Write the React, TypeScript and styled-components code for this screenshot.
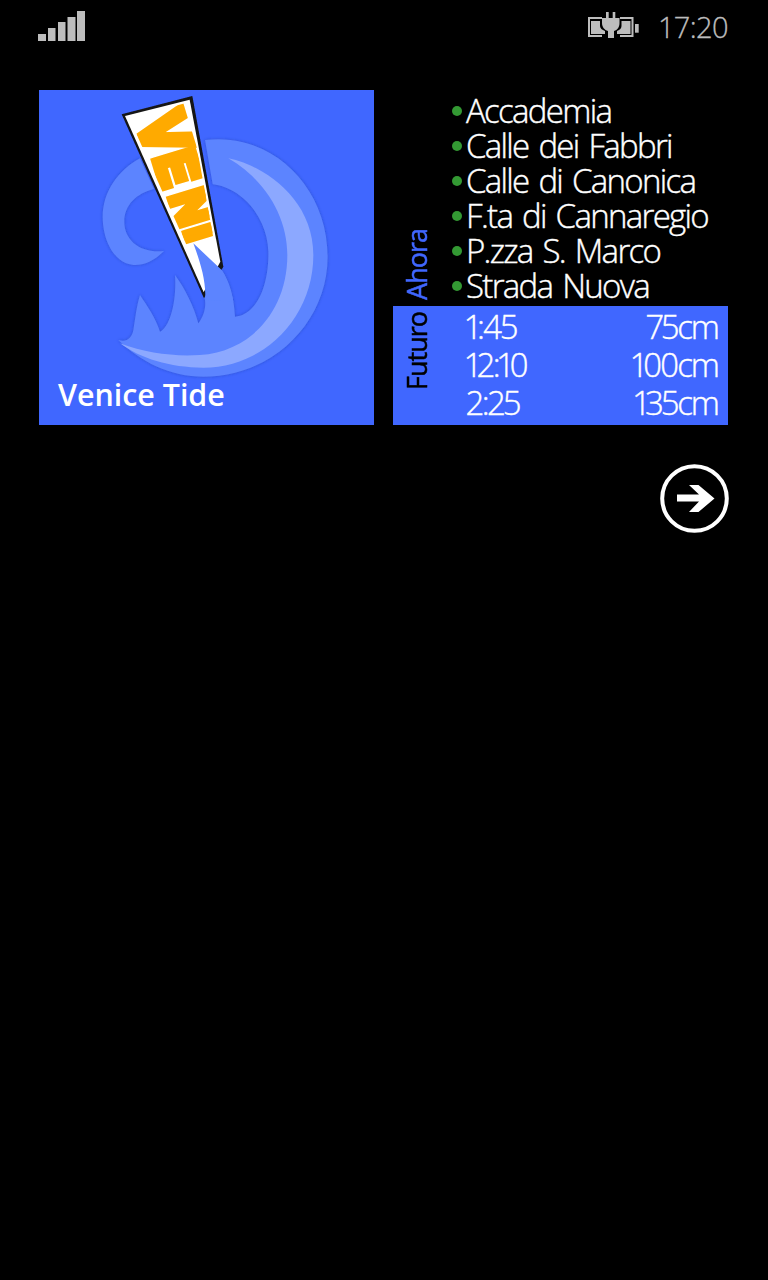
import { createGlobalStyle } from 'styled-components';
import styled from 'styled-components';

const GlobalStyle = createGlobalStyle`
  html, body {
    margin: 0;
    padding: 0;
    background: #000;
  }
  * { box-sizing: border-box; }
`;

const Screen = styled.main`
  width: 768px;
  height: 1280px;
  background: #000;
  font-family: "Open Sans", "Noto Sans", sans-serif;
  overflow: hidden;
`;

const StatusBar = styled.header`
  height: 54px;
  display: flex;
  align-items: center;
  justify-content: space-between;
  padding: 0 40px 0 38px;

  svg {
    display: block;
    margin-top: -2px;
  }
`;

const StatusRight = styled.div`
  display: flex;
  align-items: center;
  gap: 19px;
`;

const Clock = styled.span`
  font-size: 29px;
  font-weight: 300;
  line-height: 54px;
  color: #bdbdbd;
  letter-spacing: -0.6px;
  -webkit-text-stroke: 0.3px #bdbdbd;
`;

const TileGrid = styled.section`
  margin-top: 36px;
  padding-left: 39px;
  display: grid;
  grid-template-columns: 335px 335px;
  gap: 19px;
`;

const AppTile = styled.div`
  width: 335px;
  height: 335px;
  background: #4067ff;
  display: flex;
  flex-direction: column;
  align-items: flex-start;
  justify-content: flex-end;
  padding: 0 0 10px 19px;
  position: relative;
`;

const LogoArt = styled.svg`
  position: absolute;
  inset: 0;
  width: 335px;
  height: 335px;
`;

const TileName = styled.span`
  position: relative;
  font-size: 30.4px;
  line-height: 40px;
  font-weight: 600;
  color: #fff;
`;

const LiveTile = styled.div`
  width: 335px;
  height: 335px;
  display: flex;
  flex-direction: column;
`;

const Section = styled.div<{ $filled?: boolean }>`
  display: flex;
  background: ${({ $filled }) => ($filled ? '#4067ff' : 'transparent')};
  height: ${({ $filled }) => ($filled ? '119px' : '216px')};
`;

const SideLabel = styled.div<{ $tone: string; $align: 'start' | 'end' }>`
  width: 72px;
  flex: none;
  display: flex;
  justify-content: flex-start;
  align-items: ${({ $align }) => ($align === 'end' ? 'flex-end' : 'flex-start')};
  padding: ${({ $align }) => ($align === 'end' ? '0 0 6px 11px' : '6px 0 0 11px')};
  color: ${({ $tone }) => $tone};

  span {
    writing-mode: vertical-rl;
    transform: rotate(180deg);
    font-size: 27px;
    line-height: 26px;
    font-weight: 400;
    letter-spacing: -1px;
    -webkit-text-stroke: 0.5px ${({ $tone }) => $tone};
  }
`;

const GaugeList = styled.ul`
  list-style: none;
  margin: 0;
  padding: 3px 0 0;
  flex: none;
`;

const Gauge = styled.li`
  height: 35px;
  line-height: 35px;
  display: flex;
  align-items: center;
  margin-left: -13px;
  font-size: 33px;
  font-weight: 300;
  color: #fff;
  letter-spacing: -1.7px;
  word-spacing: 3px;
  white-space: nowrap;
  -webkit-text-stroke: 0.4px #fff;

  &::before {
    content: '';
    width: 10px;
    height: 10px;
    border-radius: 50%;
    background: #339933;
    margin: 1px 4px 0 0;
    flex: none;
  }
`;

const ForecastList = styled.div`
  flex: 1;
  padding: 2px 10px 0 1px;
`;

const Forecast = styled.div`
  height: 38px;
  line-height: 38px;
  display: flex;
  justify-content: space-between;
  align-items: center;
  font-size: 33px;
  font-weight: 300;
  color: #fff;
  letter-spacing: -2px;
  font-variant-numeric: proportional-nums;
  -webkit-text-stroke: 0.4px #fff;
`;

const NextRow = styled.div`
  display: flex;
  justify-content: flex-end;
  padding: 39px 39px 0 0;
`;

const NextButton = styled.button`
  width: 69px;
  height: 69px;
  padding: 0;
  border: 0;
  background: none;
  display: block;
`;

const SignalIcon = () => (
  <svg width="47" height="30" viewBox="0 0 47 30" fill="#bdbdbd">
    <rect x="0" y="23" width="8" height="7" />
    <rect x="10" y="17" width="7.5" height="13" />
    <rect x="20" y="11" width="7.5" height="19" />
    <rect x="29.5" y="6" width="8" height="24" />
    <rect x="39" y="0" width="8" height="30" />
  </svg>
);

const BatteryIcon = () => (
  <svg width="51" height="28" viewBox="0 0 51 28" fill="#bdbdbd">
    <path d="M0 5h14v2H2v16h12v2H0z" />
    <path d="M3 9h9v5c0 2 2 4 5 5v3H3z" />
    <path d="M32 5h13.5v20H32v-2h11.5V7H32z" />
    <path d="M33.5 9h9v13H29v-3c3-1 4.5-3 4.5-5z" />
    <path d="M18 0h2.7v6h4V0h2.6v6h4.2v5c0 4-2 7-5.5 8v7h-6v-7c-3.5-1-6-4-6-8V6H18z" />
    <path d="M47 12h3.7v8.7H47z" />
  </svg>
);

// the letters shrink towards the tip of the pennant
const pennantLetters = [
  { char: 'V', x: 322, y: 108, sx: 1.7, sy: 1.95 },
  { char: 'E', x: 372, y: 218, sx: 1.5, sy: 1.7 },
  { char: 'N', x: 418, y: 332, sx: 1.45, sy: 1.55 },
  { char: 'I', x: 462, y: 436, sx: 1.5, sy: 1.3 },
];

const TideLogo = () => (
  <LogoArt viewBox="27 15 1005 1005">
    <defs>
      <filter id="soft" x="-10%" y="-10%" width="120%" height="120%">
        <feGaussianBlur stdDeviation="2.2" />
      </filter>
      <filter id="rim" x="-10%" y="-10%" width="120%" height="120%">
        <feGaussianBlur in="SourceGraphic" stdDeviation="2" result="body" />
        <feDropShadow in="body" dx="0" dy="0" stdDeviation="5" floodColor="#1f3aa8" floodOpacity="0.55" />
      </filter>
      <clipPath id="pennantFace">
        <polygon points="298,100 476,52 556,490 474,490" />
      </clipPath>
    </defs>
    <g filter="url(#rim)">
      <path
        fill="#5b84ff"
        d="M265 765 C290 772 305 760 310 735 C316 700 320 660 330 630
           C350 660 378 700 390 740 C420 725 440 650 435 570
           C465 610 492 665 505 715 C520 695 528 670 525 645
           L490 475 L575 555 C600 590 612 640 615 695
           C680 690 717 600 715 500 C712 400 640 310 548 298
           L525 165 C720 140 893 300 893 515 C893 710 730 875 520 875
           C420 875 330 830 265 765 Z"
      />
      <path
        fill="#5b84ff"
        d="M330 220 L372 312 C320 325 283 360 283 410 C283 465 330 505 402 498
           C370 530 340 542 310 540 C255 535 218 470 218 395 C218 320 265 255 330 220 Z"
      />
    </g>
    <path
      fill="#8ca8ff"
      filter="url(#soft)"
      d="M595 220 C700 240 850 340 850 510 C850 700 700 848 520 848 C420 848 330 820 270 775
         C350 805 430 815 510 810 C660 800 772 680 772 510 C772 390 700 280 595 220 Z"
    />
    <g filter="url(#soft)">
      <polygon points="275,88 487,33 580,545 522,640" fill="#141414" />
      <polygon points="285,93 479,44 571,530 521,622" fill="#fff" />
      <g clipPath="url(#pennantFace)">
        {pennantLetters.map((l) => (
          <text
            key={l.char}
            transform={`translate(${l.x} ${l.y}) rotate(73) scale(${l.sx} ${l.sy})`}
            fill="#ffaa00"
            stroke="#ffaa00"
            strokeWidth="14"
            fontFamily="'Liberation Sans', sans-serif"
            fontWeight="700"
            fontSize="100"
          >
            {l.char}
          </text>
        ))}
      </g>
      <path fill="#5b84ff" d="M490 475 L575 555 C590 580 605 620 610 650 L525 645 C530 590 510 530 490 475 Z" />
    </g>
  </LogoArt>
);

const gauges = [
  'Accademia',
  'Calle dei Fabbri',
  'Calle di Canonica',
  'F.ta di Cannaregio',
  'P.zza S. Marco',
  'Strada Nuova',
];

const forecasts = [
  { time: '1:45', level: '75cm' },
  { time: '12:10', level: '100cm' },
  { time: '2:25', level: '135cm' },
];

export default function App() {
  return (
    <Screen>
      <GlobalStyle />
      <StatusBar>
        <SignalIcon />
        <StatusRight>
          <BatteryIcon />
          <Clock>17:20</Clock>
        </StatusRight>
      </StatusBar>

      <TileGrid>
        <AppTile>
          <TideLogo />
          <TileName>Venice Tide</TileName>
        </AppTile>

        <LiveTile>
          <Section>
            <SideLabel $tone="#4067ff" $align="end">
              <span>Ahora</span>
            </SideLabel>
            <GaugeList>
              {gauges.map((name) => (
                <Gauge key={name}>{name}</Gauge>
              ))}
            </GaugeList>
          </Section>
          <Section $filled>
            <SideLabel $tone="#000" $align="start">
              <span>Futuro</span>
            </SideLabel>
            <ForecastList>
              {forecasts.map((row) => (
                <Forecast key={row.time}>
                  <span>{row.time}</span>
                  <span>{row.level}</span>
                </Forecast>
              ))}
            </ForecastList>
          </Section>
        </LiveTile>
      </TileGrid>

      <NextRow>
        <NextButton aria-label="Siguiente">
          <svg width="69" height="69" viewBox="0 0 69 69">
            <circle cx="34.5" cy="34.5" r="32.3" fill="none" stroke="#fff" strokeWidth="4" />
            <path fill="#fff" d="M17 30.5h22L29 21h9.5l16 13.5-16 13.5H29l10-10.5H17z" />
          </svg>
        </NextButton>
      </NextRow>
    </Screen>
  );
}
